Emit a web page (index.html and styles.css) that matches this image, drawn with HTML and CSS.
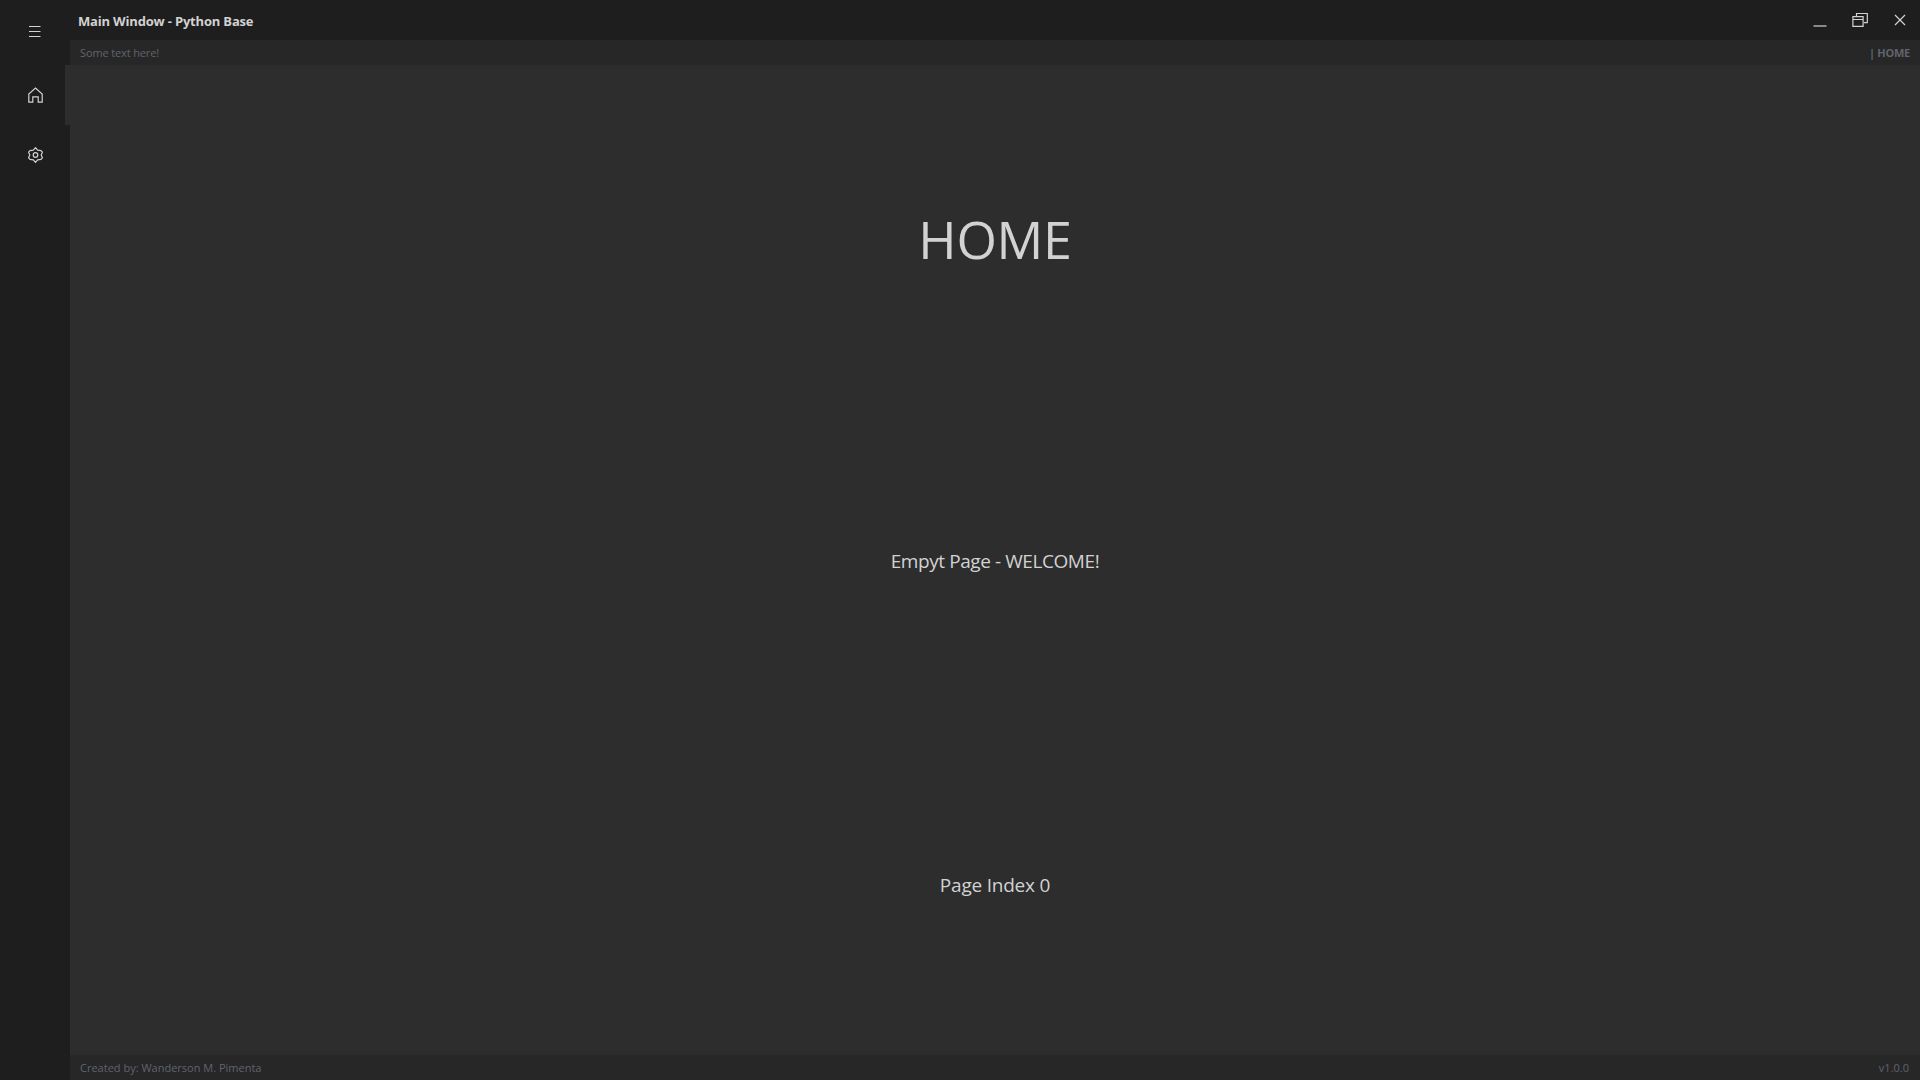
FILE: index.html
```html
<!DOCTYPE html>
<html lang="en">
<head>
<meta charset="utf-8">
<title>Main Window - Python Base</title>
<link rel="stylesheet" href="styles.css">
</head>
<body>
<div class="window">
  <nav class="sidebar">
    <button class="menu-button toggle" aria-label="Menu">
      <svg width="20" height="20" viewBox="0 0 20 20"><path d="M4 5.5h11.5M4 10.5h11.5M4 15.5h11.5"/></svg>
    </button>
    <button class="menu-button active" aria-label="Home">
      <svg width="20" height="20" viewBox="0 0 20 20"><path d="M3.8 17.2V9L10.5 3l6.7 6v8.2h-4v-5.4H7.8v5.4z"/></svg>
    </button>
    <button class="menu-button" aria-label="Settings">
      <svg width="20" height="20" viewBox="0 0 20 20"><path d="M10.5 2.7 12.6 5.2 16 5.6 17.4 7.2 16.2 10 17.4 12.8 16 14.4 12.6 14.8 10.5 17.3 8.4 14.8 5 14.4 3.6 12.8 4.8 10 3.6 7.2 5 5.6 8.4 5.2z" stroke-linejoin="round"/><circle cx="10.5" cy="10" r="2.3"/></svg>
    </button>
  </nav>
  <div class="main">
    <header class="title-bar">
      <h1 class="title"><span class="title-text">Main Window - Python Base</span></h1>
      <div class="controls">
        <button class="control" aria-label="Minimize"><svg width="20" height="20" viewBox="0 0 20 20"><path d="M3.5 16h13"/></svg></button>
        <button class="control" aria-label="Restore"><svg width="20" height="20" viewBox="0 0 20 20"><path d="M2.9 6.7h10.2v9.6H2.9zM2.9 9.5h10.2M6.5 6V3.5h10.8v9.2H14"/></svg></button>
        <button class="control" aria-label="Close"><svg width="20" height="20" viewBox="0 0 20 20"><path d="M5 5l10 10M15 5 5 15"/></svg></button>
      </div>
    </header>
    <div class="info-bar"><span class="info-text">Some text here!</span><span class="page-name">| HOME</span></div>
    <main class="content">
      <h2 class="heading">HOME</h2>
      <p class="message welcome">Empyt Page - WELCOME!</p>
      <p class="message index">Page Index 0</p>
    </main>
    <footer class="info-bar footer"><span class="credits">Created by: Wanderson M. Pimenta</span><span class="version">v1.0.0</span></footer>
  </div>
</div>
</body>
</html>
```

FILE: styles.css
```css
* { box-sizing: border-box; }
body {
  margin: 0;
  background: #2d2d2d;
  color: #d2d2d2;
  font-family: "Open Sans", "Noto Sans", sans-serif;
}
.window { display: flex; width: 100vw; height: 100vh; overflow: hidden; }
.sidebar { display: flex; flex-direction: column; width: 70px; background: #1e1e1e; }
button { padding: 0; border: 0; background: none; color: inherit; }
svg { display: block; fill: none; stroke: #d2d2d2; stroke-width: 1.2; }
.menu-button { display: flex; align-items: center; width: 70px; height: 60px; padding-left: 25px; }
.toggle { height: 65px; padding-bottom: 3px; }
.toggle svg { stroke-width: 1; }
.active { border-right: 5px solid #2d2d2d; }
.main { flex: 1; display: flex; flex-direction: column; min-width: 0; }
.title-bar { display: flex; justify-content: space-between; height: 40px; background: #1e1e1e; }
.title { margin: 0; padding-left: 8px; font-size: 13px; line-height: 42px; font-weight: 700; letter-spacing: -0.18px; white-space: nowrap; }
.controls { display: flex; }
.control { display: flex; align-items: center; justify-content: center; width: 40px; height: 40px; }
.info-bar {
  display: flex;
  justify-content: space-between;
  height: 25px;
  padding: 0 10px;
  background: #272727;
  color: #60646c;
  font-size: 11px;
  line-height: 25px;
}
.info-text { letter-spacing: -0.13px; }
.page-name { font-weight: 700; letter-spacing: -0.25px; }
.footer { padding-right: 11px; }
.content { flex: 1; display: grid; grid-template-rows: 350px 292px 348px; text-align: center; }
.heading { margin: 0; font-size: 52px; line-height: 348px; font-weight: 400; letter-spacing: -0.3px; }
.message { margin: 0; font-size: 19px; }
.welcome { line-height: 292px; letter-spacing: -0.42px; }
.index { line-height: 356px; letter-spacing: -0.22px; }
```
